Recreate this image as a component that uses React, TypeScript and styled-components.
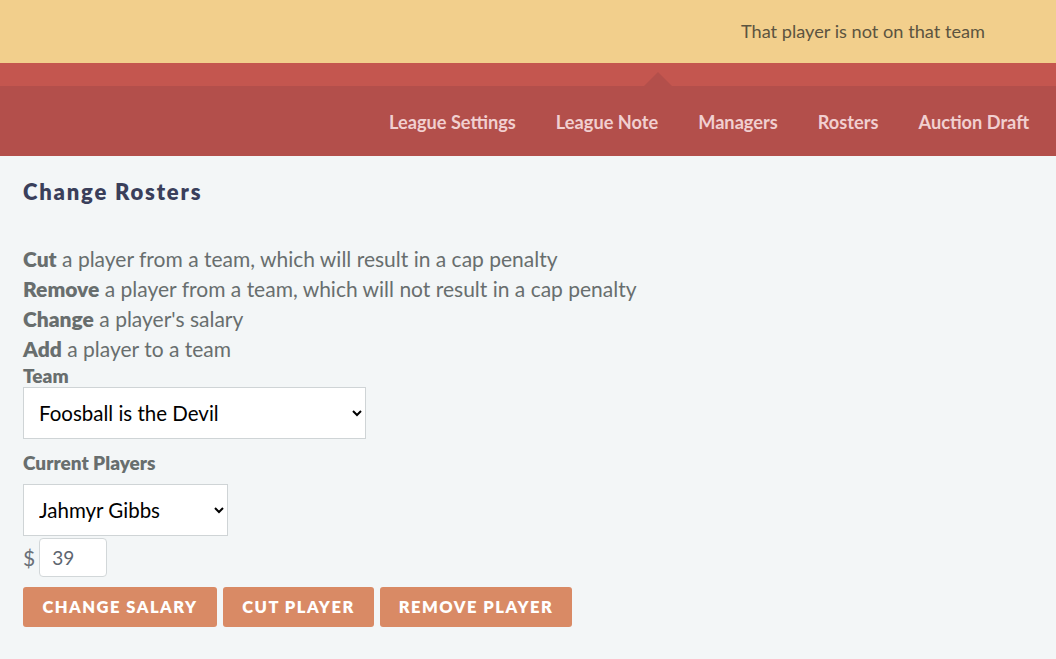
import React from 'react';
import styled, { createGlobalStyle } from 'styled-components';

const GlobalStyle = createGlobalStyle`
  html, body {
    margin: 0;
    padding: 0;
    background: #f3f6f7;
    font-family: Lato, "Noto Sans", sans-serif;
  }
  * { box-sizing: border-box; }
`;

const navItems = ['League Settings', 'League Note', 'Managers', 'Rosters', 'Auction Draft'];

const instructions = [
  { verb: 'Cut', rest: 'a player from a team, which will result in a cap penalty' },
  { verb: 'Remove', rest: 'a player from a team, which will not result in a cap penalty' },
  { verb: 'Change', rest: "a player's salary" },
  { verb: 'Add', rest: 'a player to a team' },
];

const App: React.FC = () => {
  return (
    <>
      <GlobalStyle />
      <Alert>
        <AlertText>That player is not on that team</AlertText>
      </Alert>
      <Header>
        <TopStripe>
          <Notch />
        </TopStripe>
        <Nav>
          {navItems.map((item) => (
            <NavLink key={item}>{item}</NavLink>
          ))}
        </Nav>
      </Header>
      <Main>
        <Title>Change Rosters</Title>
        <Instructions>
          {instructions.map((line) => (
            <Line key={line.verb}>
              <b>{line.verb}</b> {line.rest}
            </Line>
          ))}
        </Instructions>
        <Label $top={1}>Team</Label>
        <Select $width={343}>
          <option>Foosball is the Devil</option>
        </Select>
        <Label $top={13}>Current Players</Label>
        <Select $width={205} $top={10}>
          <option>Jahmyr Gibbs</option>
        </Select>
        <SalaryRow>
          <Dollar>$</Dollar>
          <SalaryInput defaultValue="39" />
        </SalaryRow>
        <Buttons>
          <Button $width={194}>Change Salary</Button>
          <Button $width={151}>Cut Player</Button>
          <Button $width={192}>Remove Player</Button>
        </Buttons>
      </Main>
    </>
  );
};

// Styled components
const Alert = styled.div`
  height: 63px;
  background: #f2cf8c;
  display: flex;
  align-items: center;
  justify-content: flex-end;
  padding: 0 71px 2px 0;
`;

const AlertText = styled.span`
  font-size: 18.2px;
  color: #5c5440;
`;

const Header = styled.header`
  background: #b34f4b;
`;

const TopStripe = styled.div`
  position: relative;
  height: 23px;
  background: #c4564f;
`;

const Notch = styled.div`
  position: absolute;
  left: 644px;
  bottom: 0;
  width: 0;
  height: 0;
  border-left: 14px solid transparent;
  border-right: 14px solid transparent;
  border-bottom: 14px solid #b34f4b;
`;

const Nav = styled.nav`
  height: 70px;
  display: flex;
  align-items: center;
  justify-content: flex-end;
  gap: 40px;
  padding: 2px 27px 0 0;
`;

const NavLink = styled.a`
  font-size: 18.2px;
  font-weight: 700;
  color: #f1cfd0;
  cursor: pointer;
`;

const Main = styled.main`
  padding: 22px 23px 30px;
  color: #686e6e;
`;

const Title = styled.h1`
  margin: 0;
  font-size: 22px;
  font-weight: 800;
  letter-spacing: 1.8px;
  color: #3a3f5b;
  line-height: 28px;
`;

const Instructions = styled.div`
  margin-top: 38px;
`;

const Line = styled.div`
  font-size: 21px;
  line-height: 30px;
  b {
    font-weight: 800;
  }
`;

const Label = styled.div<{ $top?: number }>`
  margin-top: ${(p) => p.$top ?? 0}px;
  font-size: 19px;
  font-weight: 800;
  line-height: 22px;
`;

const Select = styled.select<{ $width: number; $top?: number }>`
  display: block;
  margin-top: ${(p) => p.$top ?? 0}px;
  width: ${(p) => p.$width}px;
  height: 52px;
  padding: 0 10px 0 11px;
  background: #fff;
  border: 1px solid #cfd4d6;
  border-radius: 0;
  font-family: inherit;
  font-size: 20.5px;
  color: #000;
`;

const SalaryRow = styled.div`
  display: flex;
  align-items: center;
  gap: 4px;
  margin-top: 2px;
`;

const Dollar = styled.span`
  font-size: 21px;
  color: #6a7078;
`;

const SalaryInput = styled.input`
  width: 68px;
  height: 39px;
  padding: 0 12px;
  border: 1px solid #d2d7d9;
  border-radius: 4px;
  font-family: inherit;
  font-size: 19px;
  color: #5e6670;
`;

const Buttons = styled.div`
  display: flex;
  gap: 6px;
  margin-top: 10px;
`;

const Button = styled.button<{ $width: number }>`
  width: ${(p) => p.$width}px;
  height: 40px;
  background: #d98a65;
  border: none;
  border-radius: 3px;
  color: #fff;
  font-family: inherit;
  font-size: 16.5px;
  font-weight: 800;
  letter-spacing: 1.5px;
  text-transform: uppercase;
  cursor: pointer;
`;

export default App;
